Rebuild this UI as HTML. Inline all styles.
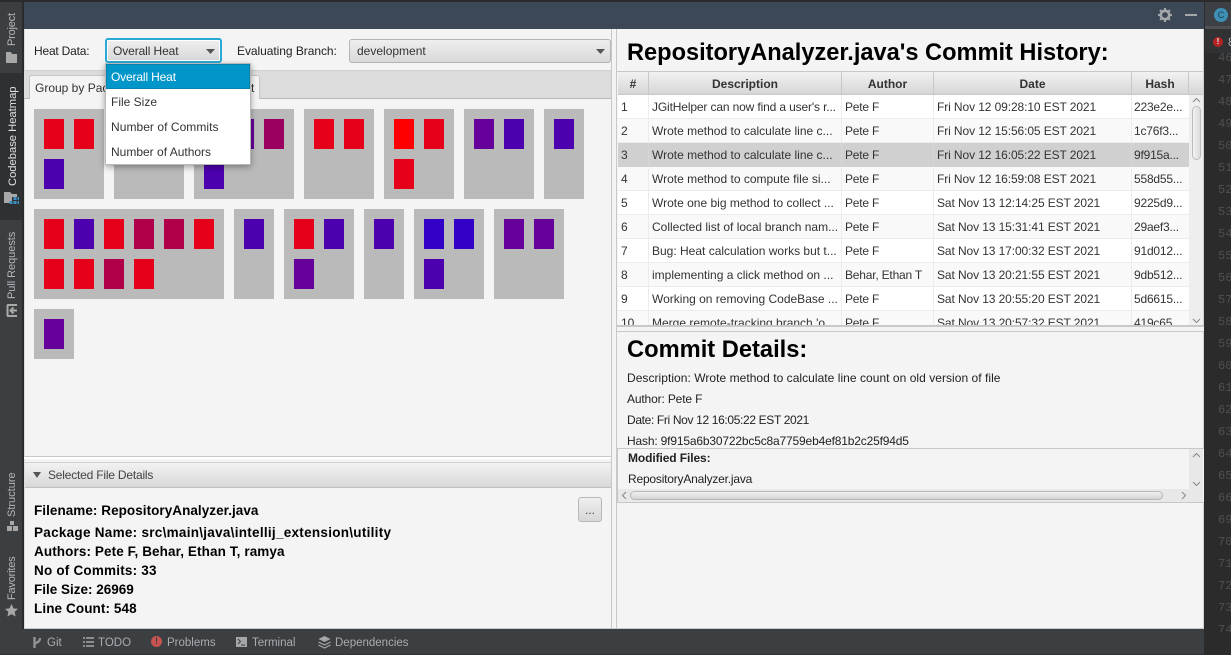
<!DOCTYPE html>
<html><head><meta charset="utf-8"><style>
*{box-sizing:border-box}
html,body{margin:0;padding:0;width:1231px;height:655px;overflow:hidden;background:#3c3f41;font-family:"Liberation Sans",sans-serif;font-size:12px;color:#333}
.a{position:absolute}
.t{position:absolute;white-space:nowrap;line-height:16px}
.tile{position:absolute;background:#bababa}
.r{position:absolute;width:20px;height:30px}
.v{position:absolute;white-space:nowrap;transform:rotate(-90deg);transform-origin:0 0;color:#b4b8bb;font-size:11px;line-height:14px}
.grad{background:linear-gradient(#efefef,#d8d8d8)}
.hd{position:absolute;top:72px;height:23px;background:linear-gradient(#f2f2f2,#d6d6d6);border-right:1px solid #c8c8c8;border-bottom:1px solid #c8c8c8;text-align:center;font-weight:bold;color:#333;line-height:25px;font-size:12px}
.row{position:absolute;left:618px;width:572px;height:24px;border-bottom:1px solid #ececec}
.row span{position:absolute;top:4px;line-height:16px;white-space:nowrap;color:#333}
.row span:nth-child(3){letter-spacing:-.2px}
.row span:nth-child(4){letter-spacing:-.1px}
.row span:nth-child(5){letter-spacing:-.2px}
.bb{position:absolute;top:635px;color:#a9adb0;line-height:16px;white-space:nowrap;font-size:11.5px}
.b{position:absolute;left:34px;font-weight:bold;color:#000;font-size:13.5px;line-height:18px;white-space:nowrap}
.it{position:absolute;left:106px;width:144px;height:25px;padding-left:5px;line-height:27px;color:#333;white-space:nowrap}
</style></head><body>
<div class="a" style="left:0;top:0;width:1231px;height:2px;background:#2b2b2b"></div>
<div class="a" style="left:24px;top:2px;width:1180px;height:27px;background:#3c4856"></div>
<div class="a" style="left:0;top:2px;width:23px;height:627px;background:#3c3f41"></div>
<div class="a" style="left:22px;top:2px;width:2px;height:627px;background:#2b2b2b"></div>
<div class="a" style="left:0;top:73px;width:22px;height:147px;background:#2e3032"></div>

<div class="v" style="left:5px;top:46px;letter-spacing:-.2px">Project</div>
<svg class="a" style="left:5px;top:52px" width="13" height="11"><path d="M1 0h5l1 2h5v9H1z" fill="#a8a8a8"/></svg>
<div class="v" style="left:6px;top:186px;color:#dfe1e3;font-size:11.2px">Codebase Heatmap</div>
<svg class="a" style="left:3px;top:192px" width="16" height="14"><path d="M1 0h6l2 2h5v3H9v6H1z" fill="#a8a8a8"/><path d="M11 5h3v3h-3zM15 5h3v3h-3zM11 9h3v3h-3zM15 9h3v3h-3zM7 9h3v3H7z" fill="#3a8fc4" transform="translate(-.5 0)"/></svg>
<div class="v" style="left:5px;top:299px;letter-spacing:-.05px">Pull Requests</div>
<svg class="a" style="left:6px;top:304px" width="13" height="13"><path d="M1.500 1v11M1 1h10M1 12h10M11 6.500H5M7.500 3.500L4.500 6.500l3 3" stroke="#a8a8a8" stroke-width="2" fill="none"/></svg>
<div class="v" style="left:5px;top:517px">Structure</div>
<svg class="a" style="left:7px;top:521px" width="11" height="11"><path d="M3 0h4v4H3zM0 5h5v5H0zM6 5h5v5H6z" fill="#a8a8a8"/></svg>
<div class="v" style="left:5px;top:600px;letter-spacing:-.2px">Favorites</div>
<svg class="a" style="left:5px;top:604px" width="13" height="13"><path d="M6.500 0l2 4.400 4.500.5-3.400 3 1 4.600-4.100-2.400-4.100 2.400 1-4.600L0 4.900l4.500-.5z" fill="#a8a8a8"/></svg>

<svg class="a" style="left:1158px;top:8px" width="14" height="14"><circle cx="7" cy="7" r="4.200" fill="none" stroke="#a4a8ab" stroke-width="2.600"/><path d="M7 0v14M0 7h14M2 2l10 10M12 2L2 12" stroke="#a4a8ab" stroke-width="2" stroke-dasharray="2.400 9.200"/></svg>
<div class="a" style="left:1185px;top:14px;width:12px;height:2px;background:#a4a8ab"></div>

<div class="a" style="left:1204px;top:2px;width:27px;height:653px;background:#2b2b2b"></div>
<div class="a" style="left:1205px;top:2px;width:26px;height:26px;background:#3c4045"></div>
<div class="a" style="left:1205px;top:26px;width:26px;height:3px;background:#4e5254"></div>
<div class="a" style="left:1214px;top:8px;width:14px;height:14px;border-radius:7px;background:#3f8fb5;color:#163b4d;font-size:9px;line-height:14px;text-align:center">C</div>
<div class="a" style="left:1218px;top:47px;width:13px;height:585px;overflow:hidden;color:#4d5053;font-size:12px;line-height:22px;font-family:'Liberation Mono',monospace">46<br>47<br>48<br>49<br>50<br>51<br>52<br>53<br>54<br>55<br>56<br>57<br>58<br>59<br>60<br>61<br>62<br>63<br>64<br>65<br>66<br>69<br>70<br>71<br>72<br>73<br>74</div>
<div class="a" style="left:1205px;top:29px;width:26px;height:24px;background:#303234"></div>
<div class="a" style="left:1213px;top:37px;width:10px;height:10px;border-radius:5px;background:#b32424;color:#eee;font-size:8px;line-height:10px;text-align:center;font-weight:bold">!</div>
<div class="t" style="left:1228px;top:34px;color:#aaa">8</div>

<!-- Left pane -->
<div class="a" style="left:24px;top:29px;width:1180px;height:600px;background:#f4f4f4"></div>
<div class="a" style="left:24px;top:29px;width:1px;height:600px;background:#dcdcdc"></div>
<div class="a" style="left:611px;top:29px;width:6px;height:600px;background:#f4f4f4;border-left:1px solid #c8c8c8;border-right:1px solid #c8c8c8"></div>
<div class="a" style="left:24px;top:70px;width:587px;height:29px;background:#dcdcdc;border-bottom:1px solid #b8b8b8;border-top:1px solid #d0d0d0"></div>
<div class="a" style="left:29px;top:75px;width:231px;height:24px;background:#f4f4f4;border:1px solid #c4c4c4;border-bottom:none;border-radius:3px 3px 0 0"></div>
<div class="t" style="left:35px;top:80px">Group by Package</div>
<div class="t" style="left:251px;top:80px">t</div>
<div class="t" style="left:34px;top:43px;color:#222;letter-spacing:-.2px">Heat Data:</div>
<div class="a grad" style="left:105px;top:38px;width:117px;height:25px;border:2px solid #29aad6;border-radius:3px;box-shadow:inset 0 0 0 1px #fff"></div>
<div class="t" style="left:113px;top:43px;letter-spacing:-.1px">Overall Heat</div>
<svg class="a" style="left:206px;top:49px" width="9" height="5"><path d="M0 0h9L4.500 5z" fill="#555"/></svg>
<div class="t" style="left:237px;top:43px;color:#222;letter-spacing:-.05px">Evaluating Branch:</div>
<div class="a grad" style="left:349px;top:39px;width:262px;height:24px;border:1px solid #b4b4b4;border-radius:3px"></div>
<div class="t" style="left:357px;top:43px">development</div>
<svg class="a" style="left:596px;top:49px" width="9" height="5"><path d="M0 0h9L4.500 5z" fill="#555"/></svg>

<!-- Tiles row 1 -->
<div class="tile" style="left:34px;top:109px;width:70px;height:90px"></div>
<div class="r" style="left:44px;top:119px;background:#e60019"></div>
<div class="r" style="left:74px;top:119px;background:#e60019"></div>
<div class="r" style="left:44px;top:159px;background:#4c00ae"></div>
<div class="tile" style="left:114px;top:109px;width:70px;height:90px"></div>
<div class="tile" style="left:194px;top:109px;width:100px;height:90px"></div>
<div class="r" style="left:234px;top:119px;background:#66009a"></div>
<div class="r" style="left:264px;top:119px;background:#9b0060"></div>
<div class="r" style="left:204px;top:159px;background:#4c00ae"></div>
<div class="tile" style="left:304px;top:109px;width:70px;height:90px"></div>
<div class="r" style="left:314px;top:119px;background:#e60019"></div>
<div class="r" style="left:344px;top:119px;background:#e60019"></div>
<div class="tile" style="left:384px;top:109px;width:70px;height:90px"></div>
<div class="r" style="left:394px;top:119px;background:#ff0000"></div>
<div class="r" style="left:424px;top:119px;background:#e60019"></div>
<div class="r" style="left:394px;top:159px;background:#e60019"></div>
<div class="tile" style="left:464px;top:109px;width:70px;height:90px"></div>
<div class="r" style="left:474px;top:119px;background:#66009a"></div>
<div class="r" style="left:504px;top:119px;background:#4c00ae"></div>
<div class="tile" style="left:544px;top:109px;width:40px;height:90px"></div>
<div class="r" style="left:554px;top:119px;background:#4c00ae"></div>
<!-- Tiles row 2 -->
<div class="tile" style="left:34px;top:209px;width:190px;height:90px"></div>
<div class="r" style="left:44px;top:219px;background:#e60019"></div>
<div class="r" style="left:74px;top:219px;background:#4c00ae"></div>
<div class="r" style="left:104px;top:219px;background:#e60019"></div>
<div class="r" style="left:134px;top:219px;background:#b0004a"></div>
<div class="r" style="left:164px;top:219px;background:#b0004a"></div>
<div class="r" style="left:194px;top:219px;background:#e60019"></div>
<div class="r" style="left:44px;top:259px;background:#e60019"></div>
<div class="r" style="left:74px;top:259px;background:#e60019"></div>
<div class="r" style="left:104px;top:259px;background:#b0004a"></div>
<div class="r" style="left:134px;top:259px;background:#e60019"></div>
<div class="tile" style="left:234px;top:209px;width:40px;height:90px"></div>
<div class="r" style="left:244px;top:219px;background:#4c00ae"></div>
<div class="tile" style="left:284px;top:209px;width:70px;height:90px"></div>
<div class="r" style="left:294px;top:219px;background:#e60019"></div>
<div class="r" style="left:324px;top:219px;background:#4c00ae"></div>
<div class="r" style="left:294px;top:259px;background:#66009a"></div>
<div class="tile" style="left:364px;top:209px;width:40px;height:90px"></div>
<div class="r" style="left:374px;top:219px;background:#4c00ae"></div>
<div class="tile" style="left:414px;top:209px;width:70px;height:90px"></div>
<div class="r" style="left:424px;top:219px;background:#3300c8"></div>
<div class="r" style="left:454px;top:219px;background:#3300c8"></div>
<div class="r" style="left:424px;top:259px;background:#4c00ae"></div>
<div class="tile" style="left:494px;top:209px;width:70px;height:90px"></div>
<div class="r" style="left:504px;top:219px;background:#66009a"></div>
<div class="r" style="left:534px;top:219px;background:#66009a"></div>
<div class="tile" style="left:34px;top:309px;width:40px;height:50px"></div>
<div class="r" style="left:44px;top:319px;background:#66009a"></div>

<!-- Dropdown -->
<div class="a" style="left:105px;top:63px;width:146px;height:102px;background:#fff;border:1px solid #b8b8b8;box-shadow:0 2px 6px rgba(0,0,0,.35)"></div>
<div class="a" style="left:106px;top:64px;width:144px;height:25px;background:#0096c9;border:1px solid #0a82ad"></div>
<div class="it" style="top:64px;color:#fff;letter-spacing:-.15px">Overall Heat</div>
<div class="it" style="top:89px">File Size</div>
<div class="it" style="top:114px;letter-spacing:.05px">Number of Commits</div>
<div class="it" style="top:139px">Number of Authors</div>

<!-- Selected file details -->
<div class="a" style="left:24px;top:456px;width:587px;height:3px;background:#fff;border-top:1px solid #c8c8c8"></div>
<div class="a" style="left:25px;top:462px;width:586px;height:26px;background:linear-gradient(#f2f2f2,#d8d8d8);border-bottom:1px solid #c0c0c0;border-top:1px solid #cfcfcf"></div>
<svg class="a" style="left:33px;top:472px" width="8" height="6"><path d="M0 0h8L4 6z" fill="#555"/></svg>
<div class="t" style="left:48px;top:467px;color:#444;letter-spacing:-.2px">Selected File Details</div>
<div class="b" style="top:502px;letter-spacing:.05px">Filename: RepositoryAnalyzer.java</div>
<div class="b" style="top:524px;letter-spacing:.28px">Package Name: src\main\java\intellij_extension\utility</div>
<div class="b" style="top:543px;letter-spacing:.1px">Authors: Pete F, Behar, Ethan T, ramya</div>
<div class="b" style="top:562px;letter-spacing:.2px">No of Commits: 33</div>
<div class="b" style="top:581px">File Size: 26969</div>
<div class="b" style="top:600px;letter-spacing:.1px">Line Count: 548</div>
<div class="a grad" style="left:578px;top:497px;width:24px;height:25px;border:1px solid #b8b8b8;border-radius:3px;text-align:center;line-height:25px;color:#444">...</div>
<div class="a" style="left:24px;top:628px;width:1180px;height:1px;background:#c8c8c8"></div>

<!-- Right top -->
<div class="t" style="left:627px;top:40px;font-size:23.6px;font-weight:bold;color:#000;line-height:26px">RepositoryAnalyzer.java's Commit History:</div>
<div class="a" style="left:617px;top:71px;width:587px;height:1px;background:#c8c8c8"></div>
<div class="hd" style="left:618px;width:31px">#</div>
<div class="hd" style="left:649px;width:193px">Description</div>
<div class="hd" style="left:842px;width:92px">Author</div>
<div class="hd" style="left:934px;width:198px">Date</div>
<div class="hd" style="left:1132px;width:57px">Hash</div>
<div class="hd" style="left:1189px;width:15px"></div>
<div class="a" style="left:618px;top:95px;width:572px;height:230px;background:#fff;overflow:hidden">
<div class="row" style="left:0;top:0;background:#fff"><span style="left:3px">1</span><span style="left:34px;letter-spacing:-.14px">JGitHelper can now find a user's r...</span><span style="left:227px">Pete F</span><span style="left:319px">Fri Nov 12 09:28:10 EST 2021</span><span style="left:516px">223e2e...</span></div>
<div class="row" style="left:0;top:24px;background:#f9f9f9"><span style="left:3px">2</span><span style="left:34px">Wrote method to calculate line c...</span><span style="left:227px">Pete F</span><span style="left:319px">Fri Nov 12 15:56:05 EST 2021</span><span style="left:516px">1c76f3...</span></div>
<div class="row" style="left:0;top:48px;background:#d0d0d0;border-color:#d0d0d0"><span style="left:3px">3</span><span style="left:34px">Wrote method to calculate line c...</span><span style="left:227px">Pete F</span><span style="left:319px">Fri Nov 12 16:05:22 EST 2021</span><span style="left:516px">9f915a...</span></div>
<div class="row" style="left:0;top:72px;background:#f9f9f9"><span style="left:3px">4</span><span style="left:34px">Wrote method to compute file si...</span><span style="left:227px">Pete F</span><span style="left:319px">Fri Nov 12 16:59:08 EST 2021</span><span style="left:516px">558d55...</span></div>
<div class="row" style="left:0;top:96px;background:#fff"><span style="left:3px">5</span><span style="left:34px">Wrote one big method to collect ...</span><span style="left:227px">Pete F</span><span style="left:319px">Sat Nov 13 12:14:25 EST 2021</span><span style="left:516px">9225d9...</span></div>
<div class="row" style="left:0;top:120px;background:#f9f9f9"><span style="left:3px">6</span><span style="left:34px">Collected list of local branch nam...</span><span style="left:227px">Pete F</span><span style="left:319px">Sat Nov 13 15:31:41 EST 2021</span><span style="left:516px">29aef3...</span></div>
<div class="row" style="left:0;top:144px;background:#fff"><span style="left:3px">7</span><span style="left:34px">Bug: Heat calculation works but t...</span><span style="left:227px">Pete F</span><span style="left:319px">Sat Nov 13 17:00:32 EST 2021</span><span style="left:516px">91d012...</span></div>
<div class="row" style="left:0;top:168px;background:#f9f9f9"><span style="left:3px">8</span><span style="left:34px">implementing a click method on ...</span><span style="left:227px">Behar, Ethan T</span><span style="left:319px">Sat Nov 13 20:21:55 EST 2021</span><span style="left:516px">9db512...</span></div>
<div class="row" style="left:0;top:192px;background:#fff"><span style="left:3px">9</span><span style="left:34px">Working on removing CodeBase ...</span><span style="left:227px">Pete F</span><span style="left:319px">Sat Nov 13 20:55:20 EST 2021</span><span style="left:516px">5d6615...</span></div>
<div class="row" style="left:0;top:216px;background:#f9f9f9"><span style="left:3px">10</span><span style="left:34px">Merge remote-tracking branch 'o...</span><span style="left:227px">Pete F</span><span style="left:319px">Sat Nov 13 20:57:32 EST 2021</span><span style="left:516px">419c65...</span></div>
</div>
<div class="a" style="left:648px;top:95px;width:1px;height:230px;background:#ececec"></div>
<div class="a" style="left:841px;top:95px;width:1px;height:230px;background:#ececec"></div>
<div class="a" style="left:933px;top:95px;width:1px;height:230px;background:#ececec"></div>
<div class="a" style="left:1131px;top:95px;width:1px;height:230px;background:#ececec"></div>
<div class="a" style="left:648px;top:143px;width:1px;height:24px;background:#d6d6d6"></div>
<div class="a" style="left:841px;top:143px;width:1px;height:24px;background:#d6d6d6"></div>
<div class="a" style="left:933px;top:143px;width:1px;height:24px;background:#d6d6d6"></div>
<div class="a" style="left:1131px;top:143px;width:1px;height:24px;background:#d6d6d6"></div>
<div class="a" style="left:1189px;top:95px;width:14px;height:233px;background:#eeeeee"></div>
<div class="a" style="left:1203px;top:29px;width:1px;height:600px;background:#d0d0d0"></div>
<div class="a" style="left:1192px;top:106px;width:9px;height:54px;background:linear-gradient(90deg,#f2f2f2,#dcdcdc);border:1px solid #bcbcbc;border-radius:5px"></div>
<svg class="a" style="left:1192px;top:97px" width="9" height="6"><path d="M1 5l3.500-3.500L8 5" stroke="#888" fill="none"/></svg>
<svg class="a" style="left:1192px;top:318px" width="9" height="6"><path d="M1 1l3.500 3.500L8 1" stroke="#888" fill="none"/></svg>
<div class="a" style="left:617px;top:325px;width:587px;height:7px;background:#f4f4f4;border-top:2px solid #c8c8c8;border-bottom:1px solid #c8c8c8"></div>

<!-- Commit details -->
<div class="t" style="left:627px;top:336px;font-size:23.7px;font-weight:bold;color:#000;line-height:28px">Commit Details:</div>
<div class="t" style="left:627px;top:370px;color:#222;letter-spacing:.04px">Description: Wrote method to calculate line count on old version of file</div>
<div class="t" style="left:627px;top:391px;color:#222;letter-spacing:-.15px">Author: Pete F</div>
<div class="t" style="left:627px;top:412px;color:#222;letter-spacing:-.35px">Date: Fri Nov 12 16:05:22 EST 2021</div>
<div class="t" style="left:627px;top:433px;color:#222;letter-spacing:-.17px">Hash: 9f915a6b30722bc5c8a7759eb4ef81b2c25f94d5</div>
<div class="a" style="left:617px;top:448px;width:587px;height:55px;background:#f4f4f4;border-top:1px solid #c8c8c8;border-bottom:1px solid #c8c8c8;border-left:1px solid #c8c8c8"></div>
<div class="t" style="left:628px;top:450px;font-weight:bold;color:#222;letter-spacing:-.1px">Modified Files:</div>
<div class="t" style="left:628px;top:471px;color:#222;letter-spacing:-.2px">RepositoryAnalyzer.java</div>
<div class="a" style="left:1189px;top:449px;width:14px;height:53px;background:#e8e8e8"></div>
<div class="a" style="left:618px;top:489px;width:585px;height:13px;background:#e8e8e8"></div>
<div class="a" style="left:630px;top:491px;width:533px;height:9px;background:linear-gradient(#f0f0f0,#d4d4d4);border:1px solid #b8b8b8;border-radius:5px"></div>
<svg class="a" style="left:1192px;top:452px" width="9" height="6"><path d="M1 5l3.500-3.500L8 5" stroke="#888" fill="none"/></svg>
<svg class="a" style="left:1192px;top:481px" width="9" height="6"><path d="M1 1l3.500 3.500L8 1" stroke="#888" fill="none"/></svg>
<svg class="a" style="left:621px;top:491px" width="6" height="9"><path d="M5 1L1.500 4.500 5 8" stroke="#888" fill="none"/></svg>
<svg class="a" style="left:1181px;top:491px" width="6" height="9"><path d="M1 1l3.500 3.500L1 8" stroke="#888" fill="none"/></svg>

<!-- Bottom bar -->
<div class="a" style="left:0;top:629px;width:1204px;height:26px;background:#3c3f41"></div>
<div class="a" style="left:0;top:654px;width:1204px;height:1px;background:#323232"></div>
<svg class="a" style="left:31px;top:636px" width="11" height="13"><path d="M3.500 1v11M9 2c0 4-3 4-5.500 6" stroke="#8f9396" stroke-width="2.400" fill="none"/></svg>
<div class="bb" style="left:47px">Git</div>
<svg class="a" style="left:83px;top:637px" width="11" height="10"><path d="M0 1h2M3 1h8M0 5h2M3 5h8M0 9h2M3 9h8" stroke="#a4a8ab" stroke-width="1.600"/></svg>
<div class="bb" style="left:98px">TODO</div>
<div class="a" style="left:151px;top:636px;width:11px;height:11px;border-radius:6px;background:#c75450;color:#3c3f41;font-size:9px;line-height:11px;text-align:center;font-weight:bold">!</div>
<div class="bb" style="left:167px">Problems</div>
<svg class="a" style="left:236px;top:637px" width="11" height="10"><path d="M0 0h11v10H0z" fill="#a4a8ab"/><path d="M2 2l2.500 2.500L2 7M5 8h4" stroke="#3c3f41" fill="none"/></svg>
<div class="bb" style="left:252px">Terminal</div>
<svg class="a" style="left:318px;top:636px" width="13" height="13"><path d="M6.500 0l6 3-6 3-6-3z" fill="#a4a8ab"/><path d="M.5 6l6 3 6-3M.5 9l6 3 6-3" stroke="#a4a8ab" fill="none" stroke-width="1.200"/></svg>
<div class="bb" style="left:335px">Dependencies</div>
</body></html>
